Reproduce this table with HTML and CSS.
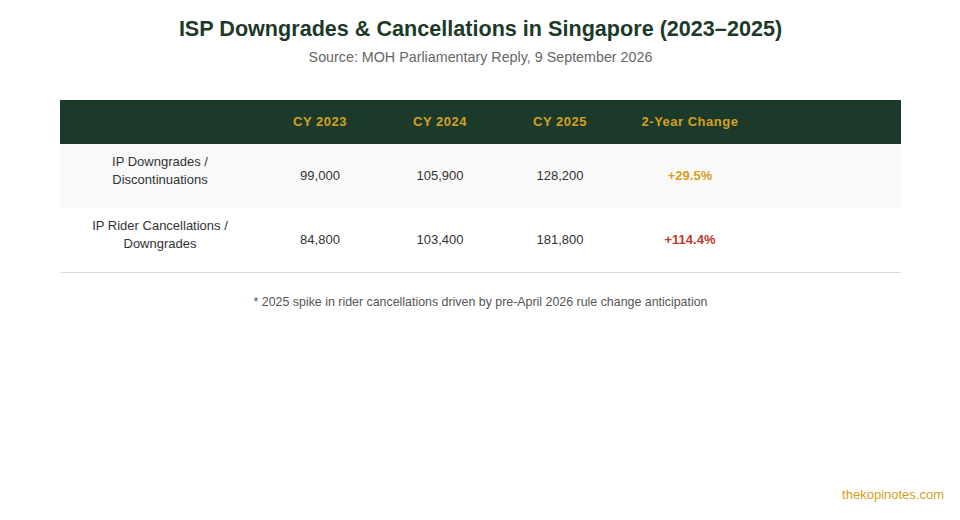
FILE: index.html
```html
<!DOCTYPE html>
<html>
<head>
<meta charset="utf-8">
<link rel="stylesheet" href="styles.css">
</head>
<body>
<div class="page">
  <h1 class="title">ISP Downgrades &amp; Cancellations in Singapore (2023–2025)</h1>
  <p class="subtitle">Source: MOH Parliamentary Reply, 9 September 2026</p>
  <div class="table">
    <div class="row head">
      <div class="cell"></div>
      <div class="cell">CY 2023</div>
      <div class="cell">CY 2024</div>
      <div class="cell">CY 2025</div>
      <div class="cell">2-Year Change</div>
      <div class="cell"></div>
    </div>
    <div class="row alt">
      <div class="cell label">IP Downgrades /<br>Discontinuations</div>
      <div class="cell">99,000</div>
      <div class="cell">105,900</div>
      <div class="cell">128,200</div>
      <div class="cell change gold">+29.5%</div>
      <div class="cell"></div>
    </div>
    <div class="row last">
      <div class="cell label">IP Rider Cancellations /<br>Downgrades</div>
      <div class="cell">84,800</div>
      <div class="cell">103,400</div>
      <div class="cell">181,800</div>
      <div class="cell change red">+114.4%</div>
      <div class="cell"></div>
    </div>
  </div>
  <p class="note">* 2025 spike in rider cancellations driven by pre-April 2026 rule change anticipation</p>
  <div class="footer">thekopinotes.com</div>
</div>
</body>
</html>
```

FILE: styles.css
```css
html, body {
  margin: 0;
  padding: 0;
  background: #ffffff;
}
body {
  font-family: "Liberation Sans", Arial, sans-serif;
  width: 960px;
  height: 520px;
  overflow: hidden;
}
.page {
  display: flex;
  flex-direction: column;
  height: 520px;
  padding: 0 59px 0 60px;
  box-sizing: border-box;
}
.title {
  margin: 16px 0 0;
  text-align: center;
  font-size: 21.6px;
  line-height: 26px;
  font-weight: bold;
  color: #1c3a2a;
}
.subtitle {
  margin: 6px 0 0;
  text-align: center;
  font-size: 14.3px;
  line-height: 18px;
  color: #666666;
}
.table {
  margin-top: 34px;
  display: flex;
  flex-direction: column;
}
.row {
  display: grid;
  grid-template-columns: 200px 120px 120px 120px 140px 1fr;
  align-items: center;
}
.cell {
  text-align: center;
  font-size: 13px;
  line-height: 18px;
  color: #333333;
}
.label {
  padding-bottom: 11px;
}
.head {
  background: #1c3a2a;
  height: 44px;
}
.head .cell {
  color: #d4a020;
  font-weight: bold;
  font-size: 13px;
  letter-spacing: 0.5px;
}
.alt {
  background: #f9f9f9;
  height: 64px;
}
.last {
  height: 64px;
  border-bottom: 1px solid #dddddd;
}
.change {
  font-weight: bold;
}
.gold { color: #d4a020; }
.red { color: #c0392b; }
.note {
  margin: 21px 0 0;
  text-align: center;
  font-size: 12.4px;
  line-height: 16px;
  color: #555555;
}
.footer {
  margin-top: auto;
  margin-bottom: 16px;
  align-self: flex-end;
  margin-right: -43px;
  font-size: 13px;
  line-height: 18px;
  color: #d4a020;
}
```
